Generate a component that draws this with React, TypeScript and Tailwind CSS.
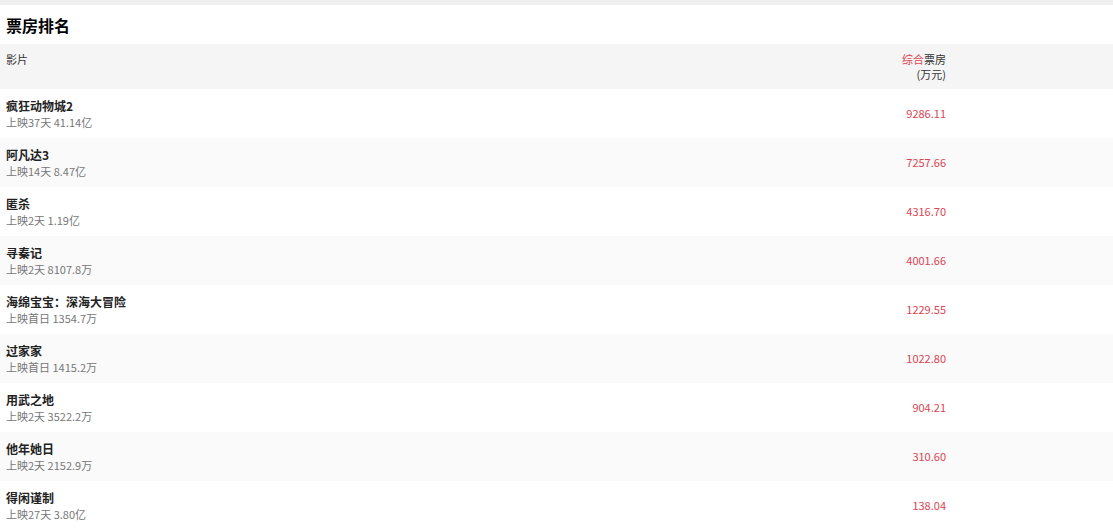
import React from "react";

const movies = [
  { name: "疯狂动物城2", info: "上映37天 41.14亿", box: "9286.11" },
  { name: "阿凡达3", info: "上映14天 8.47亿", box: "7257.66" },
  { name: "匿杀", info: "上映2天 1.19亿", box: "4316.70" },
  { name: "寻秦记", info: "上映2天 8107.8万", box: "4001.66" },
  { name: "海绵宝宝：深海大冒险", info: "上映首日 1354.7万", box: "1229.55" },
  { name: "过家家", info: "上映首日 1415.2万", box: "1022.80" },
  { name: "用武之地", info: "上映2天 3522.2万", box: "904.21" },
  { name: "他年她日", info: "上映2天 2152.9万", box: "310.60" },
  { name: "得闲谨制", info: "上映27天 3.80亿", box: "138.04" },
];

export default function App() {
  return (
    <div className="bg-white min-h-screen font-['Noto_Sans_CJK_SC',sans-serif] text-[#333]">
      <div className="h-[5px] bg-[#f0f0f0]" />
      <h1 className="h-[39px] flex items-center px-[6px] text-[16px] font-bold text-black">票房排名</h1>
      <div className="grid grid-cols-[1fr_auto_167px] bg-[#f5f5f5] h-[45px] text-[11px] leading-[15px] pt-[8px]">
        <div className="px-[6px] text-[#333]">影片</div>
        <div className="text-right">
          <div>
            <span className="text-[#dc4452]">综合</span>
            <span>票房</span>
          </div>
          <div>(万元)</div>
        </div>
        <div />
      </div>
      {movies.map((m, i) => (
        <div
          key={m.name}
          className={`grid grid-cols-[1fr_auto_167px] h-[49px] items-center ${i % 2 === 1 ? "bg-[#fafafa]" : "bg-white"}`}
        >
          <div className="px-[6px]">
            <div className="text-[12px] leading-[17px] font-bold text-[#222]">{m.name}</div>
            <div className="text-[11px] leading-[17px] text-[#777]">{m.info}</div>
          </div>
          <div className="text-right text-[11px] text-[#dc4452]">{m.box}</div>
          <div />
        </div>
      ))}
    </div>
  );
}
